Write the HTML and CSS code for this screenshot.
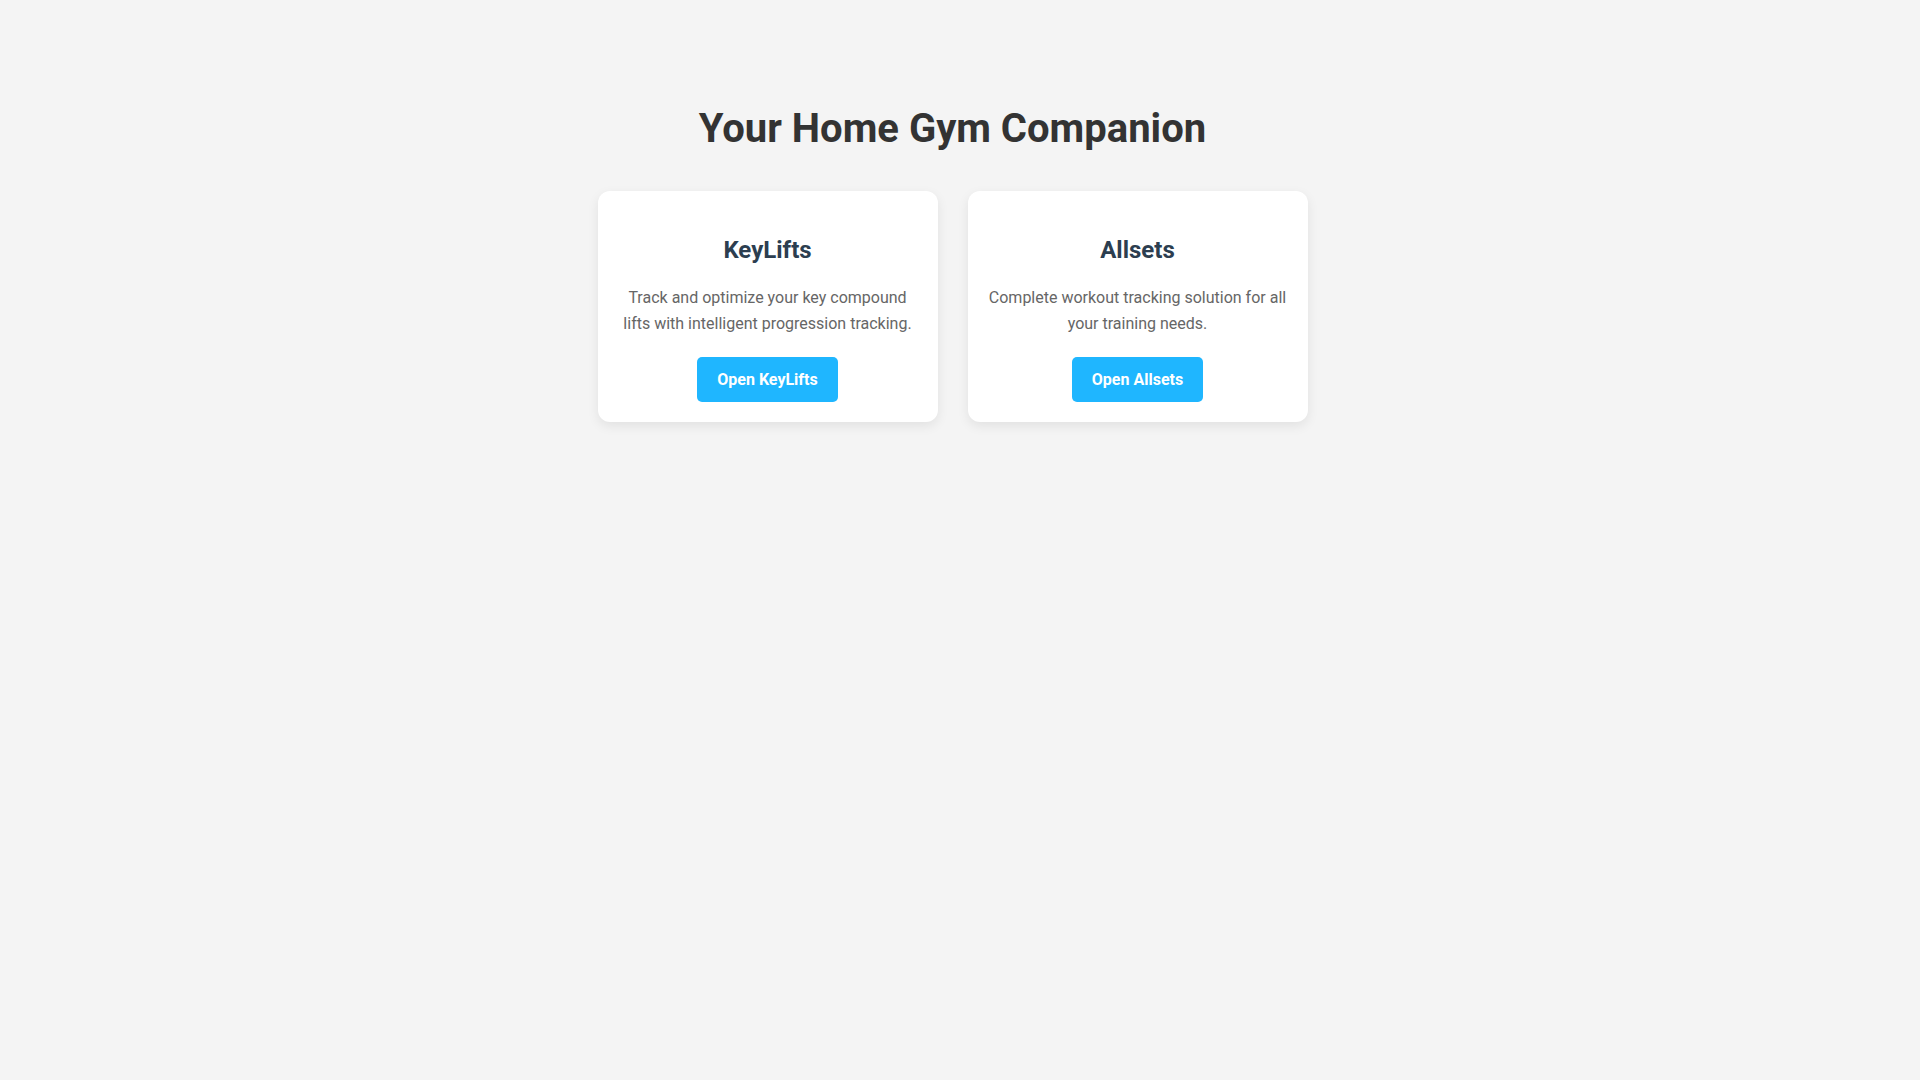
FILE: index.html
```html
<!DOCTYPE html>
<html lang="en">
<head>
  <meta charset="UTF-8">
  <title>Your Home Gym Companion</title>
  <link rel="stylesheet" href="styles.css">
</head>
<body>

  <main class="page">
    <h1>Your Home Gym Companion</h1>

    <!-- Apps -->
    <div class="apps">
      <div class="app-card">
        <h2>KeyLifts</h2>
        <p>Track and optimize your key compound lifts with intelligent progression tracking.</p>
        <a href="#" class="btn">Open KeyLifts</a>
      </div>

      <div class="app-card">
        <h2>Allsets</h2>
        <p>Complete workout tracking solution for all your training needs.</p>
        <a href="#" class="btn">Open Allsets</a>
      </div>
    </div>
  </main>

</body>
</html>
```

FILE: styles.css
```css
/* Base */
html {
  overflow-y: scroll;
}

body {
  font-family: 'Roboto', 'Liberation Sans', sans-serif;
  background-color: #f4f4f4;
  color: #333;
  line-height: 1.6;
  margin: 0;
  padding: 20px 35px 20px 20px;
  min-height: 100vh;
}

.page {
  padding-top: 77px;
  text-align: center;
}

h1 {
  font-size: 40px;
  font-weight: 700;
  color: #333;
  margin: 0 0 30px;
}

/* Cards */
.apps {
  display: flex;
  justify-content: center;
  gap: 30px;
}

.app-card {
  box-sizing: border-box;
  width: 340px;
  background-color: #fff;
  padding: 20px;
  border-radius: 12px;
  box-shadow: 0 4px 12px rgba(0, 0, 0, 0.08);
}

.app-card h2 {
  font-size: 24px;
  font-weight: 700;
  color: #2c3e50;
  margin: 20px 0 16px;
}

.app-card p {
  font-size: 16px;
  color: #666;
  margin: 0 0 20px;
}

.btn {
  display: inline-block;
  padding: 10px 20px;
  background-color: #1fb6ff;
  color: #fff;
  font-size: 16px;
  font-weight: 700;
  text-decoration: none;
  border-radius: 5px;
}

.btn:hover {
  background-color: #0ea5ef;
}
```
